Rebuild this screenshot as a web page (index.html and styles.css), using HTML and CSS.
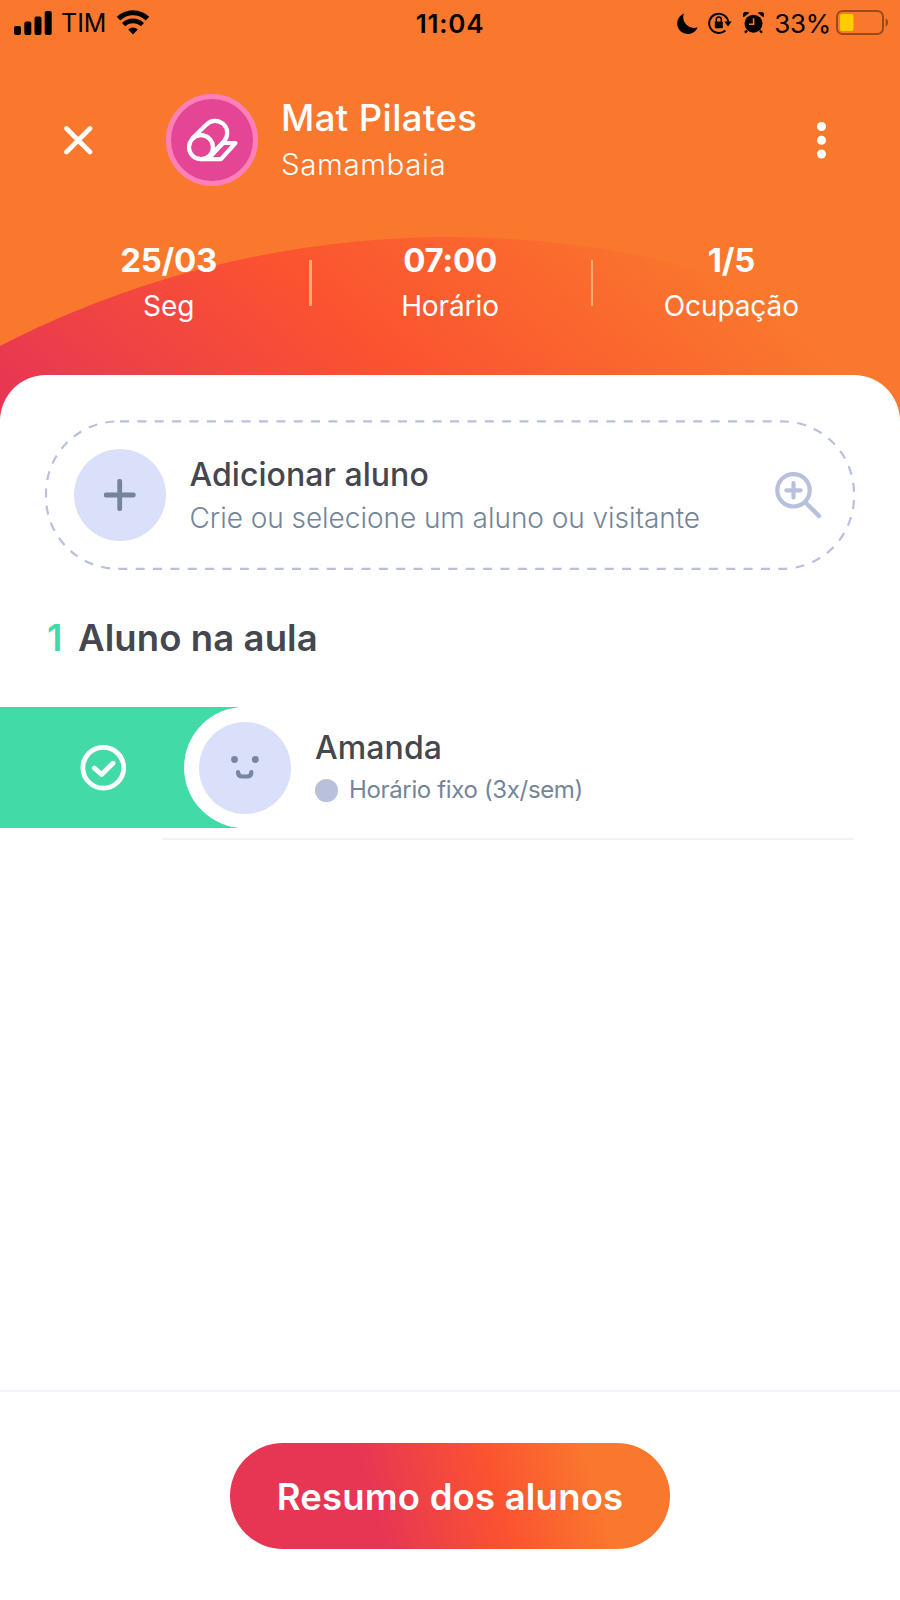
FILE: index.html
```html
<!DOCTYPE html>
<html lang="pt-BR">
<head>
<meta charset="utf-8">
<title>Mat Pilates</title>
<link rel="stylesheet" href="styles.css">
</head>
<body>
<div class="screen">
  <header class="header">
    <svg class="header-arc" viewBox="0 0 900 430" width="900" height="430">
      <defs>
        <linearGradient id="sunset" gradientUnits="userSpaceOnUse" x1="-195" y1="235" x2="165" y2="-199">
          <stop offset="0" stop-color="#e63654"/>
          <stop offset="0.497" stop-color="#fb5330"/>
          <stop offset="1" stop-color="#fa782d"/>
        </linearGradient>
      </defs>
      <circle cx="450" cy="1220" r="983" fill="url(#sunset)"/>
    </svg>

    <div class="status">
      <div class="status-left">
        <svg width="38" height="24" viewBox="0 0 38 24">
          <rect x="0" y="15" width="7" height="9" rx="2"/>
          <rect x="10.3" y="10.5" width="7" height="13.5" rx="2"/>
          <rect x="20.5" y="5.5" width="7" height="18.5" rx="2"/>
          <rect x="30.7" y="0" width="7" height="24" rx="2"/>
        </svg>
        <span class="carrier">TIM</span>
        <svg class="wifi" width="34" height="25" viewBox="0 0 34 25" fill="none" stroke="#000">
          <path d="M2.5 8.6a20.6 20.6 0 0 1 29 0" stroke-width="5"/>
          <path d="M7.6 14.7a13.4 13.4 0 0 1 18.8 0" stroke-width="4.6"/>
          <path d="M17 24.4l-4.8-4.9a7 7 0 0 1 9.6 0z" fill="#000" stroke="none"/>
        </svg>
      </div>
      <span class="clock">11:04</span>
      <div class="status-right">
        <svg width="21" height="21" viewBox="0 0 21 21"><path d="M7 .5A10.6 10.6 0 1 0 20.7 14.2 10.6 10.6 0 0 1 7 .5z"/></svg>
        <svg class="lock" width="24" height="22" viewBox="0 0 24 22">
          <path d="M17.3 18.4A9.6 9.6 0 1 1 20.3 10" fill="none" stroke="#000" stroke-width="2"/>
          <path d="M16.3 9.6h7.4L20 14.4z"/>
          <rect x="6.8" y="9.5" width="8" height="6.8" rx="1"/>
          <path d="M8.3 10V7.4a2.5 2.5 0 0 1 5 0V10" fill="none" stroke="#000" stroke-width="1.5"/>
        </svg>
        <svg class="alarm" width="21" height="22" viewBox="0 0 21 22">
          <circle cx="10.5" cy="11.7" r="9"/>
          <path d="M.6 5.3A3.5 3.5 0 0 1 6.2 1zM20.4 5.3A3.5 3.5 0 0 0 14.8 1z"/>
          <path d="M4 18.5l-2 2.3M17 18.5l2 2.3" stroke="#000" stroke-width="2.2"/>
          <path d="M10.6 6.2v6H6" fill="none" stroke="#fa782d" stroke-width="1.6"/>
        </svg>
        <span class="percent">33%</span>
        <svg class="battery" width="53" height="25" viewBox="0 0 53 25">
          <rect x="1" y="1" width="46" height="23" rx="5.5" fill="none" stroke="#9c4a1c" stroke-width="2"/>
          <rect x="4" y="4" width="13.5" height="17" rx="2" fill="#ffcc00"/>
          <path d="M49.6 8.3c3.3 1.2 3.3 7.2 0 8.4z" fill="#9c4a1c"/>
        </svg>
      </div>
    </div>

    <div class="title-bar">
      <svg class="close" width="30" height="30" viewBox="0 0 30 30" stroke="#fff" stroke-width="4.6" stroke-linecap="round"><path d="M3.5 3.5L27 27M27 3.5L3.5 27"/></svg>
      <div class="class-icon">
        <svg width="54" height="44" viewBox="0 0 54 44" fill="none" stroke="#fff" stroke-width="4.2" stroke-linejoin="round">
          <circle cx="16" cy="29.2" r="12"/>
          <path d="M7 20.7L21.2 6.7A12 12 0 0 1 39 23.2L26.5 36.5"/>
          <path d="M16 41.2h20L50.5 25H38L23.5 40.5"/>
        </svg>
      </div>
      <div class="title-text">
        <h1 class="title">Mat Pilates</h1>
        <p class="subtitle">Samambaia</p>
      </div>
      <svg class="more" width="10" height="38" viewBox="0 0 10 38" fill="#fff"><circle cx="4.5" cy="5.5" r="4.5"/><circle cx="4.5" cy="19.3" r="4.5"/><circle cx="4.5" cy="33" r="4.5"/></svg>
    </div>

    <div class="stats">
      <div class="stat"><b class="stat-value">25/03</b><span class="stat-label">Seg</span></div>
      <div class="stat stat-ruled"><b class="stat-value">07:00</b><span class="stat-label">Horário</span></div>
      <div class="stat stat-ruled"><b class="stat-value">1/5</b><span class="stat-label">Ocupação</span></div>
    </div>
  </header>

  <main class="sheet">
    <div class="add-card">
      <svg class="add-outline" width="810" height="150" viewBox="0 0 810 150"><rect x="1" y="1.4" width="808" height="147.4" rx="72" fill="none" stroke="#b8c0db" stroke-width="2.2" stroke-dasharray="9 8.37" stroke-dashoffset="-2"/></svg>
      <div class="avatar">
        <svg width="32" height="32" viewBox="0 0 32 32" stroke="#758599" stroke-width="4.8" stroke-linecap="round"><path d="M15.7 2.3v27.400M2 16h27.400"/></svg>
      </div>
      <div class="add-text">
        <div class="add-title">Adicionar aluno</div>
        <div class="add-sub">Crie ou selecione um aluno ou visitante</div>
      </div>
      <svg class="search" width="47" height="47" viewBox="0 0 47 47" fill="none" stroke="#b8c0db" stroke-width="4.2" stroke-linecap="round"><circle cx="18.5" cy="18.3" r="16.2"/><path d="M30.5 30.500L44 44" stroke-width="4.4"/><path d="M18.5 11.100v14.4M11.3 18.3h14.4"/></svg>
    </div>

    <h2 class="section-title"><span class="count">1</span><span class="section-label">Aluno na aula</span></h2>

    <div class="student-row">
      <div class="presence">
        <svg width="46" height="46" viewBox="0 0 46 46" fill="none" stroke="#fff" stroke-width="4.8" stroke-linecap="round" stroke-linejoin="round"><circle cx="23.3" cy="22.7" r="20.4"/><path d="M14.300 23l7.300 6.500L33 18.200"/></svg>
      </div>
      <div class="student">
        <div class="avatar">
          <svg width="30" height="24" viewBox="0 0 30 24"><circle cx="4.5" cy="3.5" r="3.4" fill="#7886a1"/><circle cx="25.3" cy="3.5" r="3.4" fill="#7886a1"/><path d="M8 16c0 3.200 1.600 4.500 4.400 4.500h4.600c2.800 0 4.400-1.300 4.400-4.500" fill="none" stroke="#7886a1" stroke-width="4.2" stroke-linecap="round"/></svg>
        </div>
        <div class="student-text">
          <div class="student-name">Amanda</div>
          <div class="plan"><i class="plan-dot"></i><span class="plan-text">Horário fixo (3x/sem)</span></div>
        </div>
      </div>
    </div>
    <div class="divider"></div>
  </main>

  <footer class="footer">
    <button class="summary">Resumo dos alunos</button>
  </footer>
</div>
</body>
</html>
```

FILE: styles.css
```css
* { box-sizing: border-box; }
body { margin: 0; font-family: Inter, "Liberation Sans", sans-serif; }
h1, h2, p { margin: 0; font-weight: inherit; }
svg { display: block; flex: none; }

.screen {
  position: relative;
  display: flex;
  flex-direction: column;
  width: 900px;
  height: 1600px;
  overflow: hidden;
  background: #fa782d;
}

.header { position: relative; z-index: 0; height: 375px; flex: none; }
.header-arc { position: absolute; top: 0; left: 0; z-index: -1; }

.status {
  display: grid;
  grid-template-columns: 1fr auto 1fr;
  align-items: center;
  height: 45px;
  padding: 0 11px 0 14px;
  line-height: 45px;
  white-space: nowrap;
}
.status-left, .status-right { display: flex; align-items: center; }
.status-right { justify-content: flex-end; }
.carrier { font-size: 25px; margin: 1px 10px 0 9px; }
.wifi { margin-top: -2px; }
.clock { font-size: 26px; font-weight: 600; letter-spacing: 0.8px; padding-right: 3px; }
.lock { margin-left: 10px; }
.alarm { margin-left: 11px; margin-top: -1px; }
.percent { font-size: 26px; letter-spacing: -0.3px; margin: 0 5px 0 10px; }
.battery { margin-top: -2px; }

.title-bar {
  display: flex;
  align-items: center;
  height: 92px;
  margin-top: 49px;
  padding: 0 73px 0 63px;
  color: #fff;
}
.class-icon {
  display: grid;
  place-items: center;
  width: 92px;
  height: 92px;
  margin-left: 73px;
  border: 5px solid #ff80b8;
  border-radius: 50%;
  background: #e44595;
}
.title-text { margin-left: 23px; flex: 1; padding-top: 2px; white-space: nowrap; }
.title { font-size: 36.5px; font-weight: 500; line-height: 46px; letter-spacing: 0.4px; }
.subtitle { font-size: 29.5px; font-weight: 350; line-height: 46px; letter-spacing: 0.6px; }

.stats { display: flex; height: 92px; margin-top: 51px; padding: 0 28px; color: #fff; }
.stat { flex: 1; display: flex; flex-direction: column; align-items: center; position: relative; }
.stat-ruled::before {
  content: "";
  position: absolute;
  left: 0;
  top: 23px;
  width: 2.5px;
  height: 46px;
  background: #ffad75;
}
.stat-value { font-size: 33px; line-height: 46px; letter-spacing: -0.3px; }
.stat-label { font-size: 28px; line-height: 46px; letter-spacing: -0.1px; }

.sheet { position: relative; z-index: 1; flex: 1; background: #fff; border-radius: 46px 46px 0 0; padding-top: 45px; }
.add-card {
  position: relative;
  display: flex;
  align-items: center;
  height: 150px;
  margin: 0 45px;
  padding: 0 33px 0 29px;
}
.add-outline { position: absolute; top: 0; left: 0; }
.avatar {
  display: grid;
  place-items: center;
  width: 92px;
  height: 92px;
  flex: none;
  border-radius: 50%;
  background: #dadffa;
}
.add-text { margin-left: 23.5px; flex: 1; padding-top: 2px; white-space: nowrap; }
.add-title { font-size: 32px; font-weight: 500; line-height: 43px; letter-spacing: 0.05px; color: #45474f; }
.add-sub { font-size: 28px; font-weight: 350; line-height: 44px; letter-spacing: -0.04px; color: #758599; }

.section-title { display: flex; margin: 45px 46px 0 47px; font-size: 36.5px; font-weight: 600; line-height: 46px; letter-spacing: 0.1px; color: #45474f; }
.count { width: 31px; color: #42dba8; }

.student-row { display: flex; height: 121px; margin-top: 46px; }
.presence {
  display: flex;
  align-items: center;
  width: 238px;
  padding-left: 80px;
  background: #42dba8;
}
.student {
  position: relative;
  display: flex;
  align-items: center;
  flex: 1;
  margin-left: -54px;
  padding-left: 15px;
  background: #fff;
  border-radius: 61px 0 0 61px;
}
.student-text { margin-left: 24px; padding-top: 2px; white-space: nowrap; }
.student-name { font-size: 32px; font-weight: 500; line-height: 43px; letter-spacing: 0.1px; color: #45474f; }
.plan { display: flex; align-items: center; gap: 11px; font-size: 24px; line-height: 42px; letter-spacing: -0.35px; color: #758599; }
.plan-dot { width: 23px; height: 23px; border-radius: 50%; background: #b8c0db; }
.divider { height: 2px; margin: 10px 46px 0 162px; background: #eef3fa; }

.footer { flex: none; height: 210px; border-top: 2px solid #eff4fe; background: #fff; padding-top: 51px; text-align: center; }
.summary {
  width: 440px;
  height: 106px;
  border: 0;
  border-radius: 53px;
  padding: 2px 0 0;
  color: #fff;
  font: 600 36.5px Inter, "Liberation Sans", sans-serif;
  letter-spacing: 0.2px;
  white-space: nowrap;
  background: linear-gradient(74deg, #e63654 33%, #fb5330 60%, #fa782d 82%);
}
```
